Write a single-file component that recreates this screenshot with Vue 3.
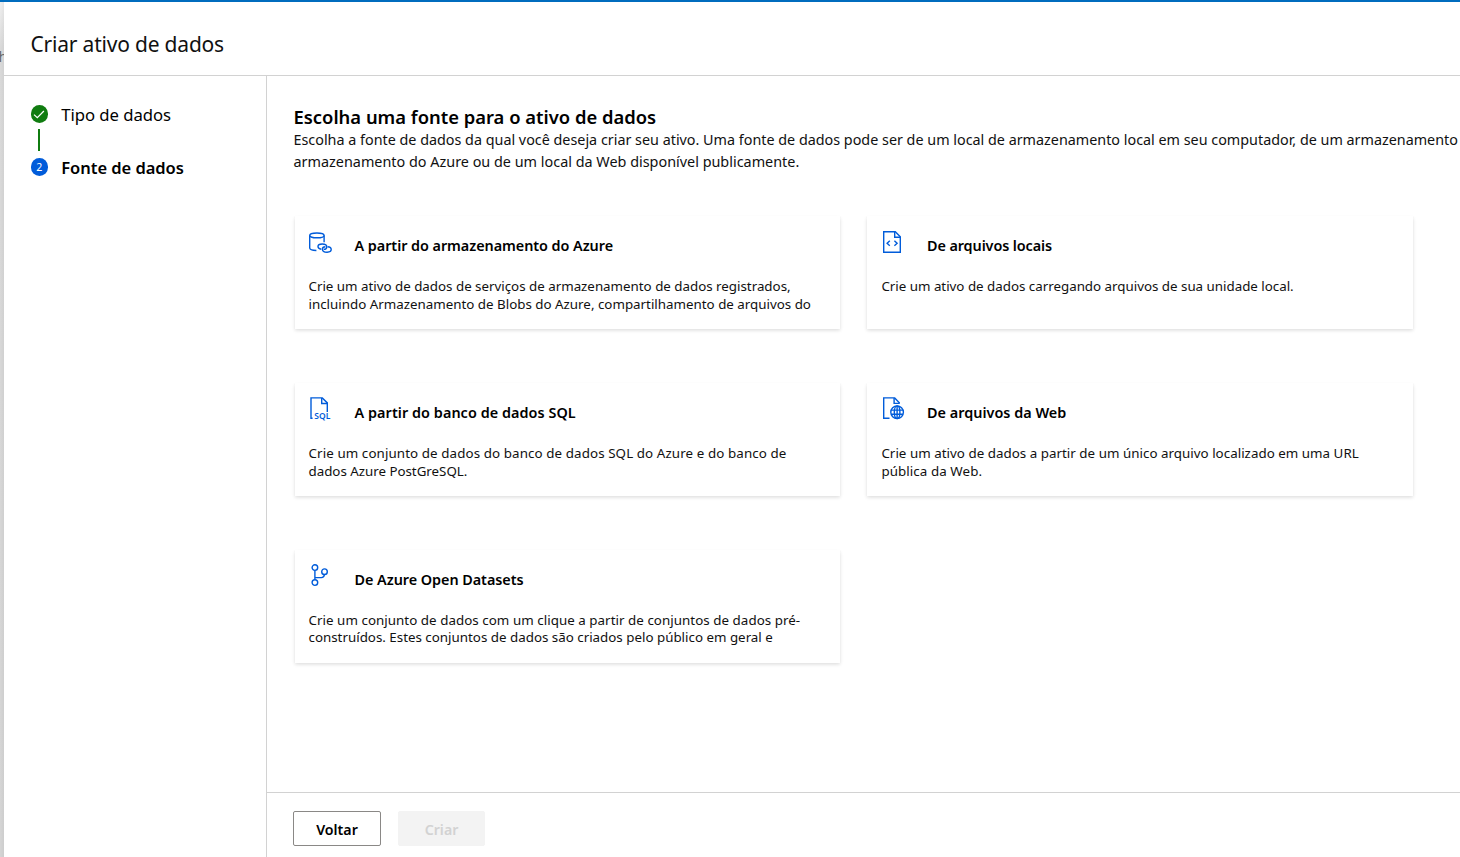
<script setup>
const steps = [
  { label: 'Tipo de dados', done: true },
  { label: 'Fonte de dados', number: 2 },
]

// Each text carries its own tracking in pixels.
const cards = [
  {
    icon: 'storage',
    title: { text: 'A partir do armazenamento do Azure', track: -0.05 },
    lines: [
      { text: 'Crie um ativo de dados de serviços de armazenamento de dados registrados,', track: -0.01 },
      { text: 'incluindo Armazenamento de Blobs do Azure, compartilhamento de arquivos do', track: 0 },
    ],
  },
  {
    icon: 'code',
    title: { text: 'De arquivos locais', track: -0.09 },
    lines: [{ text: 'Crie um ativo de dados carregando arquivos de sua unidade local.', track: -0.01 }],
  },
  {
    icon: 'sql',
    title: { text: 'A partir do banco de dados SQL', track: 0.06 },
    lines: [
      { text: 'Crie um conjunto de dados do banco de dados SQL do Azure e do banco de', track: 0.1 },
      { text: 'dados Azure PostGreSQL.', track: -0.02 },
    ],
  },
  {
    icon: 'web',
    title: { text: 'De arquivos da Web', track: 0.02 },
    lines: [
      { text: 'Crie um ativo de dados a partir de um único arquivo localizado em uma URL', track: 0.028 },
      { text: 'pública da Web.', track: 0.08 },
    ],
  },
  {
    icon: 'branch',
    title: { text: 'De Azure Open Datasets', track: -0.04 },
    lines: [
      { text: 'Crie um conjunto de dados com um clique a partir de conjuntos de dados pré-', track: 0.045 },
      { text: 'construídos. Estes conjuntos de dados são criados pelo público em geral e', track: 0 },
    ],
  },
]
</script>

<template>
  <div class="screen">
    <div class="backdrop"><span class="behind">h</span></div>
    <section class="panel">
      <header class="panel-header"><h1>Criar ativo de dados</h1></header>
      <div class="body">
        <nav class="steps">
          <template v-for="(step, i) in steps" :key="step.label">
            <div v-if="i > 0" class="connector"></div>
            <div class="step" :class="{ current: !step.done }">
              <span class="dot" :class="{ done: step.done }">
                <svg v-if="step.done" viewBox="0 0 18 18" width="18" height="18"><path d="M4 9.6 7.3 12.7 13.9 6" /></svg>
                <template v-else>{{ step.number }}</template>
              </span>
              <span>{{ step.label }}</span>
            </div>
          </template>
        </nav>
        <div class="main">
          <main class="content">
            <h2>Escolha uma fonte para o ativo de dados</h2>
            <p class="intro">
              <span class="intro-first">Escolha a fonte de dados da qual você deseja criar seu ativo. Uma fonte de dados pode ser de um local de armazenamento local em seu computador, de um armazenamento</span>
              <span class="intro-second">armazenamento do Azure ou de um local da Web disponível publicamente.</span>
            </p>
            <div class="cards">
              <article v-for="card in cards" :key="card.icon" class="card">
                <div class="card-head">
                  <svg class="icon" viewBox="0 0 24 24" width="24" height="24">
                    <g v-if="card.icon === 'storage'">
                      <ellipse cx="7.9" cy="5.4" rx="7.2" ry="2.4" />
                      <path d="M.7 5.4v12.7c0 1.5 2.7 2.4 6.7 2.4M15.1 5.4v6.8" />
                      <path d="M12.3 19.2c-1.9-.2-3.3-1.3-3.3-2.7 0-1.6 1.9-2.5 4.2-2.5 2.6 0 4.6 1.3 4.6 3 0 1.5-1.3 2.4-3.1 2.4" />
                      <path d="M18.6 16.8c2.1.1 3.6 1.3 3.6 2.8 0 1.6-1.8 2.6-4.1 2.6-2.7 0-4.7-1.2-4.7-3 0-1.5 1.4-2.4 3-2.4" />
                    </g>
                    <g v-else-if="card.icon === 'code'">
                      <path d="M2.7 1.7h11.6l5 5v15.5H2.7z" />
                      <path d="M13.7 1.7v5.6h5.6" />
                      <path d="M8.8 10.7 6.1 13.2 8.8 15.7M13.4 10.7l2.7 2.5-2.7 2.5" />
                    </g>
                    <g v-else-if="card.icon === 'sql'">
                      <path d="M3.6 21.2H2V.9h11.3l5 5v9.1" />
                      <path d="M12.7.9v5.6h5.6" />
                      <text x="5.3" y="21.5" textLength="16" lengthAdjust="spacingAndGlyphs">SQL</text>
                    </g>
                    <g v-else-if="card.icon === 'web'">
                      <path d="M8.5 21.3H2.7V.9h11l4.6 4.9v.8" />
                      <path d="M13.1.9v5.5h5.5" />
                      <circle cx="16.1" cy="15.2" r="6.3" />
                      <ellipse cx="16.1" cy="15.2" rx="2.8" ry="6.3" />
                      <path d="M10.3 13.1h11.6M10.3 17.3h11.6M16.1 8.9v12.6" />
                    </g>
                    <g v-else>
                      <circle cx="5.9" cy="3.6" r="2.8" />
                      <circle cx="5.9" cy="18.6" r="2.8" />
                      <circle cx="15.5" cy="7.7" r="2.8" />
                      <path d="M5.9 6.4v9.4M5.9 13.6h6.5c1.8 0 2.8-1.1 3-3.1" />
                    </g>
                  </svg>
                  <h3 :style="{ letterSpacing: card.title.track + 'px' }">{{ card.title.text }}</h3>
                </div>
                <p class="card-text">
                  <span v-for="line in card.lines" :key="line.text" :style="{ letterSpacing: line.track + 'px' }">{{ line.text }}</span>
                </p>
              </article>
            </div>
          </main>
          <footer class="footer">
            <button class="btn back">Voltar</button>
            <button class="btn create" disabled>Criar</button>
          </footer>
        </div>
      </div>
    </section>
  </div>
</template>

<style>
body { margin: 0; overflow: hidden; background: #fff; }
</style>

<style scoped>
* { box-sizing: border-box; }
h1, h2, h3, p { margin: 0; }
.screen {
  display: flex;
  width: 100vw;
  height: 857px;
  overflow: hidden;
  border-top: 2px solid #006cbe;
  font-family: "Noto Sans", "Open Sans", sans-serif;
  color: #000;
}
.backdrop {
  position: relative;
  flex: none;
  width: 4px;
  overflow: hidden;
  background: linear-gradient(90deg, rgba(0, 0, 0, 0), rgba(0, 0, 0, 0.04)), linear-gradient(#f0f0f0, #dadada 45px, #d5d5d5);
}
.behind { position: absolute; left: -1.5px; top: 45px; font-size: 14.4px; line-height: 20px; color: #686868; }
.panel { flex: 1; min-width: 0; display: flex; flex-direction: column; background: #fff; }
.panel-header { flex: none; height: 74px; padding: 26px 26px 0; border-bottom: 1px solid #d2d2d2; }
h1 { font-size: 21px; line-height: 32px; font-weight: 400; letter-spacing: -0.2px; color: #111; padding-left: 0.5px; }
.body { flex: 1; min-height: 0; display: flex; }
.steps { flex: none; width: 263px; padding: 26px 0 0 26.5px; border-right: 1px solid #d2d2d2; }
.step { display: flex; align-items: center; gap: 13.2px; height: 25px; font-size: 16.7px; letter-spacing: -0.04px; white-space: nowrap; }
.step.current { font-size: 16.5px; font-weight: 600; }
.dot {
  flex: none;
  display: flex;
  align-items: center;
  justify-content: center;
  width: 17.6px;
  height: 17.6px;
  margin-top: -1px;
  border-radius: 50%;
  background: #015cda;
  color: #fff;
  font-size: 10.6px;
  font-weight: 400;
}
.dot.done { background: #107c10; }
.dot svg { flex: none; fill: none; stroke: #fff; stroke-width: 1.2; }
.connector { width: 2px; height: 22px; margin: 2px 0 4px 7.5px; background: #107c10; }
.main { flex: 1; min-width: 0; display: flex; flex-direction: column; }
.content { flex: 1; padding: 29px 0 0 26.5px; overflow: hidden; }
h2 { font-size: 18.4px; line-height: 24px; font-weight: 600; }
.intro { line-height: 22px; color: #111; }
.intro span { display: block; white-space: nowrap; }
.intro-first { font-size: 14.35px; }
.intro-second { font-size: 14.4px; }
.cards { display: grid; grid-template-columns: 545.5px 546px; grid-auto-rows: 113px; gap: 54px 27px; margin: 43px 0 0 1px; }
.card { padding: 14px 14px 0; background: #fff; box-shadow: 0 1.6px 3.6px rgba(0, 0, 0, 0.14), 0 0.3px 0.9px rgba(0, 0, 0, 0.12); }
.card-head { display: flex; height: 30px; gap: 22px; }
.icon { flex: none; fill: none; stroke: #015cda; stroke-width: 1.4; }
.icon text { fill: #015cda; stroke: none; font: 600 8.4px "Noto Sans", sans-serif; }
h3 { font-size: 14.4px; line-height: 32px; font-weight: 600; white-space: nowrap; }
.card-text { margin-top: 18px; font-size: 13.35px; line-height: 17.8px; color: #111; }
.card-text span { display: block; white-space: nowrap; }
.card:nth-child(5) .card-text { line-height: 17.4px; }
.card:nth-child(even) .card-text { padding-left: 0.4px; }
.footer { flex: none; display: flex; gap: 17px; height: 65px; padding: 18px 26px 0; border-top: 1px solid #d2d2d2; }
.btn { height: 35px; padding: 2px 0 0; border: 1px solid #8a8886; border-radius: 2px; background: #fff; color: #000; font: 600 14.2px "Noto Sans", sans-serif; }
.back { width: 88px; }
.create { width: 87px; border-color: #f3f3f3; background: #f3f3f3; color: #d2d2d2; }
</style>
